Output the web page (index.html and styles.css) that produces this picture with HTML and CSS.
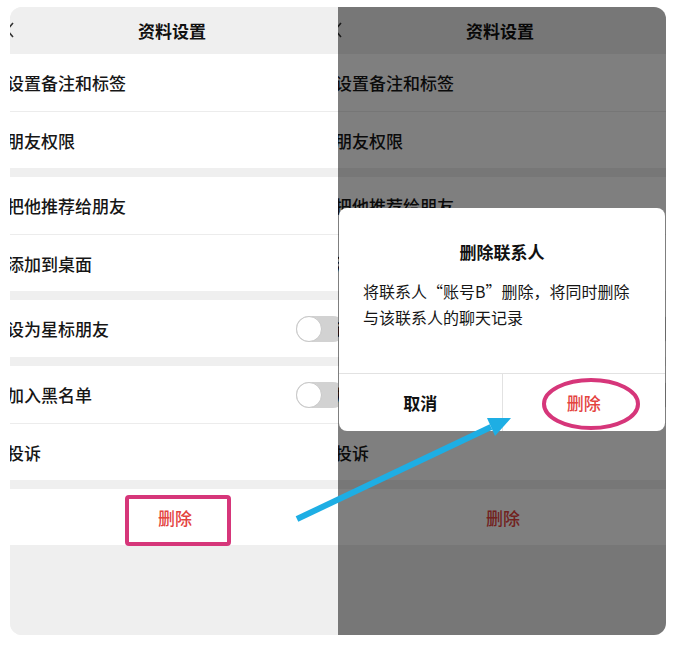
FILE: index.html
```html
<!DOCTYPE html>
<html lang="zh-CN">
	<head>
		<meta charset="utf-8"/>
		<title>资料设置</title>
		<link rel="stylesheet" href="styles.css">
	</head>
	<body>
		<div class="frame">
			<!-- 左：原始页面 -->
			<div class="panel">
				<div class="header">
					<svg class="back" width="10" height="16" viewBox="0 0 10 16"><path d="M8 1 L2 8 L8 15" fill="none" stroke="#333" stroke-width="1.6"/></svg>
					<span>资料设置</span>
				</div>
				<div class="group">
					<div class="row"><span>设置备注和标签</span><i class="arrow"></i></div>
					<div class="row"><span>朋友权限</span><i class="arrow"></i></div>
				</div>
				<div class="group">
					<div class="row"><span>把他推荐给朋友</span><i class="arrow"></i></div>
					<div class="row"><span>添加到桌面</span><i class="arrow"></i></div>
				</div>
				<div class="group">
					<div class="row"><span>设为星标朋友</span><i class="switch"></i></div>
				</div>
				<div class="group">
					<div class="row"><span>加入黑名单</span><i class="switch"></i></div>
					<div class="row"><span>投诉</span><i class="arrow"></i></div>
				</div>
				<div class="group">
					<div class="row del">删除</div>
				</div>
			</div>

			<!-- 右：弹窗 -->
			<div class="panel">
				<div class="header">
					<svg class="back" width="10" height="16" viewBox="0 0 10 16"><path d="M8 1 L2 8 L8 15" fill="none" stroke="#333" stroke-width="1.6"/></svg>
					<span>资料设置</span>
				</div>
				<div class="group">
					<div class="row"><span>设置备注和标签</span><i class="arrow"></i></div>
					<div class="row"><span>朋友权限</span><i class="arrow"></i></div>
				</div>
				<div class="group">
					<div class="row"><span>把他推荐给朋友</span><i class="arrow"></i></div>
					<div class="row"><span>添加到桌面</span><i class="arrow"></i></div>
				</div>
				<div class="group">
					<div class="row"><span>设为星标朋友</span><i class="switch"></i></div>
				</div>
				<div class="group">
					<div class="row"><span>加入黑名单</span><i class="switch"></i></div>
					<div class="row"><span>投诉</span><i class="arrow"></i></div>
				</div>
				<div class="group">
					<div class="row del">删除</div>
				</div>
				<div class="mask"></div>
				<div class="dialog">
					<div class="dialog-title">删除联系人</div>
					<div class="dialog-msg">将联系人“账号B”删除，将同时删除与该联系人的聊天记录</div>
					<div class="dialog-btns">
						<div class="btn">取消</div>
						<div class="btn red">删除</div>
					</div>
				</div>
			</div>

			<svg class="marks" width="656" height="628" viewBox="0 0 656 628">
				<rect x="117" y="490" width="102" height="47" rx="2" fill="none" stroke="#d6367a" stroke-width="4"/>
				<ellipse cx="581" cy="397" rx="47" ry="24" fill="none" stroke="#d6367a" stroke-width="4"/>
				<line x1="287" y1="512" x2="481" y2="420" stroke="#1eaee4" stroke-width="6"/>
				<polygon points="501,411 485,429 477,411" fill="#1eaee4"/>
			</svg>
		</div>
	</body>
</html>
```

FILE: styles.css
```css
html, body {
	padding: 0; border: 0; margin: 0;
	background: #fff;
	font-family: "Noto Sans CJK SC", sans-serif;
}
.frame {
	display: flex;
	position: relative;
	width: 656px;
	height: 628px;
	margin: 7px 0 0 10px;
	border-radius: 12px;
	overflow: hidden;
	background: #efefef;
}
.panel {
	position: relative;
	width: 328px;
	height: 100%;
	overflow: hidden;
	background: #efefef;
}
.header {
	display: flex;
	justify-content: center;
	align-items: center;
	height: 47px;
	font-size: 17px;
	font-weight: 700;
	color: #111;
	position: relative;
}
.header span {
	margin-right: 4px;
}
.back {
	position: absolute;
	left: -5px;
	top: 15px;
}
.group {
	background: #fff;
	margin-bottom: 9px;
}
.row {
	display: flex;
	justify-content: space-between;
	align-items: center;
	height: 57px;
	font-size: 17px;
	font-weight: 500;
	color: #161616;
	border-top: 1px solid #ececec;
	box-sizing: border-box;
}
.row:first-child {
	border-top: none;
}
.row span {
	margin-left: -3px;
}
.arrow {
	width: 8px;
	height: 8px;
	border-top: 1.5px solid #bdbdbd;
	border-right: 1.5px solid #bdbdbd;
	transform: rotate(45deg);
	margin-right: -5px;
}
.switch {
	position: relative;
	width: 50px;
	height: 26px;
	border-radius: 13px;
	background: #d2d2d2;
	margin-right: -8px;
}
.switch::before {
	content: "";
	position: absolute;
	left: 0;
	top: 0;
	width: 24px;
	height: 24px;
	border-radius: 50%;
	background: #fff;
	border: 1px solid #c8c8c8;
}
.del {
	justify-content: center;
	height: 56px;
	color: #e4443f;
	font-weight: 500;
	padding-left: 2px;
}
.mask {
	position: absolute;
	left: 0; top: 0; right: 0; bottom: 0;
	background: rgba(0, 0, 0, 0.5);
}
.dialog {
	position: absolute;
	left: 1px;
	top: 201px;
	width: 326px;
	background: #fff;
	border-radius: 8px;
	overflow: hidden;
}
.dialog-title {
	margin-top: 32px;
	text-align: center;
	font-size: 17px;
	font-weight: 700;
	line-height: 24px;
	color: #111;
}
.dialog-msg {
	margin: 14px 22px 0 24px;
	font-size: 16px;
	line-height: 26px;
	color: #161616;
	height: 95px;
}
.dialog-btns {
	display: flex;
	height: 57px;
	border-top: 1px solid #e2e2e2;
}
.btn {
	flex: 1;
	display: flex;
	justify-content: center;
	align-items: center;
	font-size: 17px;
	font-weight: 700;
	color: #111;
}
.btn + .btn {
	border-left: 1px solid #e2e2e2;
}
.btn.red {
	color: #e4443f;
	font-weight: 500;
}
.marks {
	position: absolute;
	left: 0;
	top: 0;
}
```
